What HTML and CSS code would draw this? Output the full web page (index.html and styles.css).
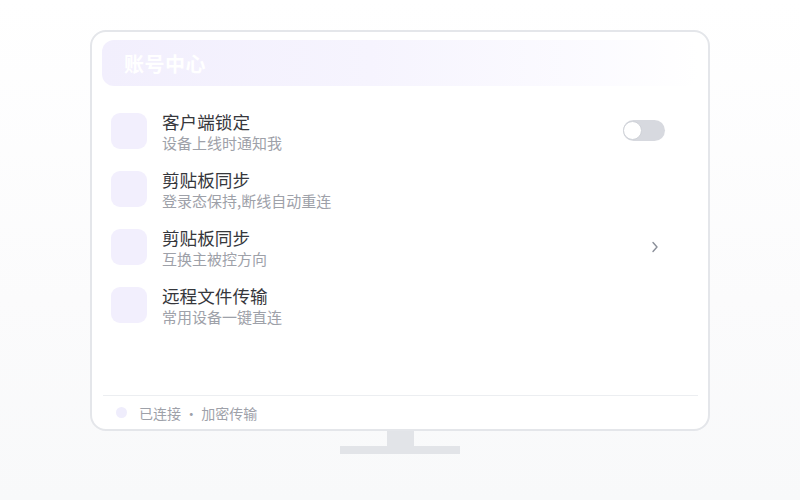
FILE: index.html
```html
<!DOCTYPE html>
<html lang="zh">
<head>
<meta charset="utf-8">
<link rel="stylesheet" href="styles.css">
</head>
<body>
<div class="stage">
  <div class="monitor">
    <div class="header"><span class="header-title">账号中心</span></div>
    <div class="list">
      <div class="row">
        <div class="icon"></div>
        <div class="texts">
          <div class="title">客户端锁定</div>
          <div class="sub">设备上线时通知我</div>
        </div>
        <div class="toggle"><div class="knob"></div></div>
      </div>
      <div class="row">
        <div class="icon"></div>
        <div class="texts">
          <div class="title">剪贴板同步</div>
          <div class="sub">登录态保持,断线自动重连</div>
        </div>
      </div>
      <div class="row">
        <div class="icon"></div>
        <div class="texts">
          <div class="title">剪贴板同步</div>
          <div class="sub">互换主被控方向</div>
        </div>
        <svg class="chev" width="8" height="12" viewBox="0 0 8 12"><path d="M2 1.5 L6 6 L2 10.5" fill="none" stroke="#8a8f99" stroke-width="1.4" stroke-linecap="round" stroke-linejoin="round"/></svg>
      </div>
      <div class="row">
        <div class="icon"></div>
        <div class="texts">
          <div class="title">远程文件传输</div>
          <div class="sub">常用设备一键直连</div>
        </div>
      </div>
    </div>
    <div class="footer">
      <span class="dot"></span>
      <span class="status">已连接 · 加密传输</span>
    </div>
  </div>
  <div class="neck"></div>
  <div class="base"></div>
</div>
</body>
</html>
```
FILE: styles.css
```css
html, body {
  margin: 0;
  padding: 0;
  height: 100%;
}
body {
  background: linear-gradient(180deg, #ffffff 0%, #fbfbfc 60%, #f8f9fa 100%);
  font-family: "Noto Sans CJK SC", "Noto Sans", sans-serif;
}
.stage {
  display: flex;
  flex-direction: column;
  align-items: center;
  padding-top: 30px;
}
.monitor {
  box-sizing: border-box;
  width: 620px;
  height: 401px;
  border: 2px solid #e4e6ea;
  border-radius: 16px;
  background: #ffffff;
  padding: 8px 10px 0 10px;
  display: flex;
  flex-direction: column;
}
.header {
  height: 46px;
  border-radius: 12px;
  background: linear-gradient(90deg, #f2effd 0%, #f6f4fe 45%, rgba(250, 249, 255, 0.6) 85%, rgba(255, 255, 255, 0) 100%);
  display: flex;
  align-items: center;
  padding-left: 22px;
}
.header-title {
  color: #ffffff;
  font-size: 20px;
  font-weight: 700;
  letter-spacing: 0.5px;
}
.list {
  flex: 1;
  padding-top: 16px;
  display: flex;
  flex-direction: column;
}
.row {
  height: 58px;
  display: flex;
  align-items: center;
  padding: 0 33px 0 9px;
}
.icon {
  width: 36px;
  height: 36px;
  border-radius: 9px;
  background: #f2effd;
  flex: none;
}
.texts {
  flex: 1;
  margin-left: 15px;
  padding-top: 2px;
  display: flex;
  flex-direction: column;
}
.title {
  font-size: 17.6px;
  line-height: 22px;
  color: #36373c;
}
.sub {
  font-size: 15px;
  line-height: 20px;
  color: #9ea1a9;
}
.toggle {
  width: 42px;
  height: 21px;
  border-radius: 11px;
  background: #d7d9df;
  position: relative;
  flex: none;
  margin-top: -2px;
}
.knob {
  position: absolute;
  left: 0;
  top: 1px;
  width: 19px;
  height: 19px;
  border-radius: 50%;
  background: #ffffff;
  border: 1px solid #cfd2d8;
  box-sizing: border-box;
}
.chev {
  flex: none;
  margin-right: 6px;
}
.footer {
  height: 33px;
  border-top: 1px solid #eceef1;
  display: flex;
  align-items: center;
  padding-left: 13px;
  margin: 0 0 0 1px;
}
.dot {
  width: 11px;
  height: 11px;
  border-radius: 50%;
  background: #efedfc;
  flex: none;
}
.status {
  margin-left: 12px;
  font-size: 14px;
  color: #9ea1a9;
}
.neck {
  width: 27px;
  height: 15px;
  background: #e2e4e8;
}
.base {
  width: 120px;
  height: 8px;
  background: #e2e4e8;
}
```
